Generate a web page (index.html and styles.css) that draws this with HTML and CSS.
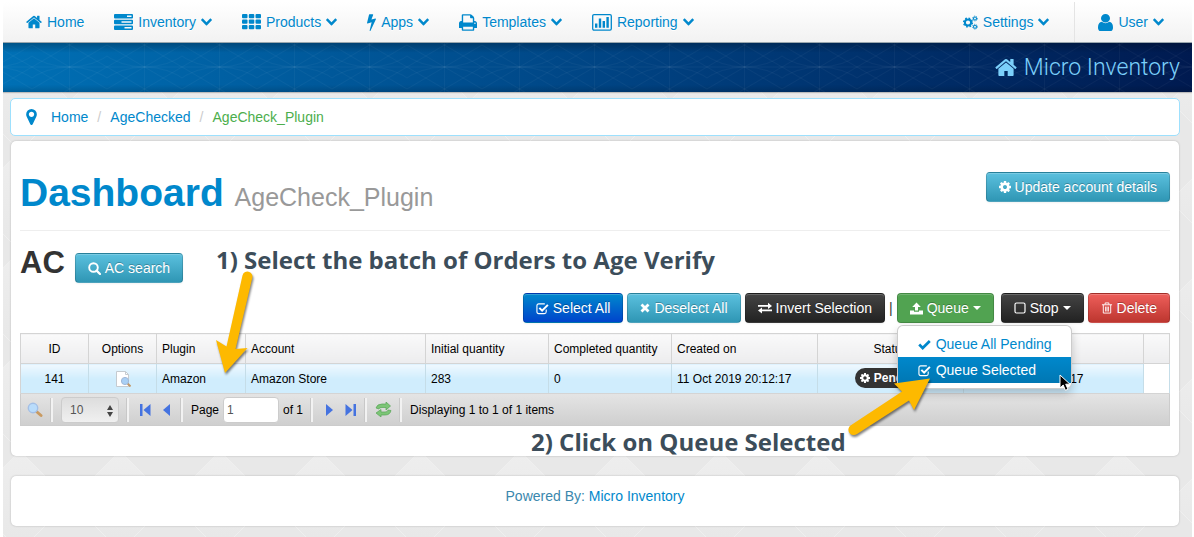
FILE: index.html
```
<!DOCTYPE html>
<html lang="en">
<head>
    <meta charset="UTF-8">
    <meta name="viewport" content="width=device-width, initial-scale=1.0">
    <title>Micro Inventory - Dashboard</title>
    <link rel="stylesheet" href="styles.css">
</head>
<body>
    <!-- Shared icons -->
    <svg class="sprite" aria-hidden="true">
        <symbol id="home" viewBox="64 192 1664 1408"><path d="M1472 992v480q0 26-19 45t-45 19h-384v-384h-256v384h-384q-26 0-45-19t-19-45v-480q0-1 .5-3t.5-3l575-474 575 474q1 2 1 6zm223-69l-62 74q-8 9-21 11h-3q-13 0-21-7l-692-577-692 577q-12 8-24 7-13-2-21-11l-62-74q-8-10-7-23.5t11-21.5l719-599q32-26 76-26t76 26l244 204v-195q0-14 9-23t23-9h192q14 0 23 9t9 23v408l219 182q10 8 11 21.5t-7 23.5z"/></symbol>
        <symbol id="chevron" viewBox="90 500 1612 1100"><path d="M1683 808l-742 741q-19 19-45 19t-45-19l-742-741q-19-19-19-45.5t19-45.5l166-165q19-19 45-19t45 19l531 531 531-531q19-19 45-19t45 19l166 165q19 19 19 45.5t-19 45.5z"/></symbol>
        <symbol id="cog" viewBox="128 128 1536 1536"><path d="M1152 896q0-106-75-181t-181-75-181 75-75 181 75 181 181 75 181-75 75-181zm512-109v222q0 12-8 23t-20 13l-185 28q-19 54-39 91 35 50 107 138 10 12 10 25t-9 23q-27 37-99 108t-94 71q-12 0-26-9l-138-108q-44 23-91 38-16 136-29 186-7 28-36 28h-222q-14 0-24.5-8.5t-11.5-21.5l-28-184q-49-16-90-37l-141 107q-10 9-25 9-14 0-25-11-126-114-165-168-7-10-7-23 0-12 8-23 15-21 51-66.5t54-70.5q-27-50-41-99l-183-27q-13-2-21-12.5t-8-23.5v-222q0-12 8-23t19-13l186-28q14-46 39-92-40-57-107-138-10-12-10-24 0-10 9-23 26-36 98.5-107.5t94.5-71.5q13 0 26 10l138 107q44-23 91-38 16-136 29-186 7-28 36-28h222q14 0 24.5 8.5t11.5 21.5l28 184q49 16 90 37l142-107q9-9 24-9 13 0 25 10 129 119 165 170 7 8 7 22 0 12-8 23-15 21-51 66.5t-54 70.5q26 50 41 98l183 28q13 2 21 12.5t8 23.5z"/></symbol>
        <symbol id="check-box" viewBox="0 0 14 13"><path d="M11 7.500v2.500q0 2-2 2H3q-2 0-2-2V3.500q0-2 2-2h6.500" fill="none" stroke="currentColor" stroke-width="1.200"/><path d="M3.600 5.800l3 3L12.800 2.600" fill="none" stroke="currentColor" stroke-width="2.200"/></symbol>
    </svg>

    <nav class="navbar">
        <ul class="nav">
            <li><a href="#"><svg class="i16"><use href="#home"/></svg>Home</a></li>
            <li><a href="#"><svg class="i19" viewBox="0 0 19 16"><path fill-rule="evenodd" d="M1 0h17q1 0 1 1v2.500q0 1-1 1H1q-1 0-1-1V1q0-1 1-1zM13 1.600v1.400h4.500V1.600zM1 5.700h17q1 0 1 1v2.500q0 1-1 1H1q-1 0-1-1V6.700q0-1 1-1zM7.500 7.300v1.400h10V7.300zM1 11.400h17q1 0 1 1v2.500q0 1-1 1H1q-1 0-1-1v-2.500q0-1 1-1zM10.500 13v1.400h7V13z"/></svg>Inventory<svg class="chev"><use href="#chevron"/></svg></a></li>
            <li><a href="#"><svg class="i19" viewBox="0 0 19 16"><g><rect width="5.500" height="4.300" rx="1"/><rect x="6.800" width="5.500" height="4.300" rx="1"/><rect x="13.500" width="5.500" height="4.300" rx="1"/><rect y="5.500" width="5.500" height="4.300" rx="1"/><rect x="6.800" y="5.500" width="5.500" height="4.300" rx="1"/><rect x="13.500" y="5.500" width="5.500" height="4.300" rx="1"/><rect y="11" width="5.500" height="4.300" rx="1"/><rect x="6.800" y="11" width="5.500" height="4.300" rx="1"/><rect x="13.500" y="11" width="5.500" height="4.300" rx="1"/></g></svg>Products<svg class="chev"><use href="#chevron"/></svg></a></li>
            <li><a href="#"><svg class="bolt" viewBox="448 0 900 1792"><path d="M1333 566q18 20 7 44l-540 1157q-13 25-42 25-4 0-14-2-17-5-25.500-19t-4.500-30l197-808-406 101q-4 1-12 1-18 0-31-11-18-15-13-39l201-825q4-14 16-23t28-9h328q19 0 32 12.500t13 29.500q0 8-5 18l-171 463 396-98q8-2 12-2 19 0 34 15z"/></svg>Apps<svg class="chev"><use href="#chevron"/></svg></a></li>
            <li><a href="#"><svg class="i18" viewBox="64 128 1664 1536"><path d="M448 1536h896v-256h-896v256zm0-640h896v-384h-160q-40 0-68-28t-28-68v-160h-640v640zm1152 64q0-26-19-45t-45-19-45 19-19 45 19 45 45 19 45-19 19-45zm128 0v416q0 13-9.500 22.500t-22.500 9.500h-224v160q0 40-28 68t-68 28h-960q-40 0-68-28t-28-68v-160h-224q-13 0-22.500-9.500t-9.500-22.500v-416q0-79 56.500-135.500t135.500-56.500h64v-544q0-40 28-68t68-28h672q40 0 88 20t76 48l152 152q28 28 48 76t20 88v256h64q79 0 135.500 56.500t56.500 135.500z"/></svg>Templates<svg class="chev"><use href="#chevron"/></svg></a></li>
            <li><a href="#"><svg class="i20" viewBox="0 0 20 17"><rect x=".7" y=".7" width="18.600" height="15.400" rx="1.300" fill="none" stroke="currentColor" stroke-width="1.300"/><path d="M3 9.500h2.400v4.200H3zM6.800 4.500h2.400v9.200H6.800zM10.600 7h2.400v6.700h-2.400zM14.400 3h2.400v10.700h-2.400z"/></svg>Reporting<svg class="chev"><use href="#chevron"/></svg></a></li>
        </ul>
        <ul class="nav">
            <li><a href="#"><svg class="i15" viewBox="0 0 15 15"><g fill="none" stroke="currentColor"><circle cx="5" cy="7.500" r="3.100" stroke-width="2"/><circle cx="5" cy="7.500" r="4.400" stroke-width="1.400" stroke-dasharray="1.730"/><circle cx="12" cy="3.500" r="1.500" stroke-width="1.100"/><circle cx="12" cy="3.500" r="2.400" stroke-width=".9" stroke-dasharray=".94"/><circle cx="12" cy="11.700" r="1.500" stroke-width="1.100"/><circle cx="12" cy="11.700" r="2.400" stroke-width=".9" stroke-dasharray=".94"/></g></svg>Settings<svg class="chev"><use href="#chevron"/></svg></a></li>
            <li class="divided"><a href="#"><svg class="i15 tall" viewBox="256 128 1280 1536" preserveAspectRatio="none"><path d="M1536 1399q0 109-62.500 187t-150.500 78h-854q-88 0-150.500-78t-62.500-187q0-85 8.500-160.500t31.500-152 58.500-131 94-89 134.500-34.500q131 128 313 128t313-128q76 0 134.500 34.500t94 89 58.500 131 31.500 152 8.500 160.500zm-256-887q0 159-112.500 271.500t-271.500 112.500-271.500-112.500-112.500-271.500 112.500-271.500 271.500-112.500 271.500 112.500 112.500 271.500z"/></svg>User<svg class="chev"><use href="#chevron"/></svg></a></li>
        </ul>
    </nav>

    <header class="banner">
        <a href="#"><svg class="i22"><use href="#home"/></svg>Micro Inventory</a>
    </header>

    <main class="content">
        <ol class="breadcrumb">
            <li><svg class="pin" viewBox="384 128 1024 1536"><path d="M1152 640q0-106-75-181t-181-75-181 75-75 181 75 181 181 75 181-75 75-181zm256 0q0 109-33 179l-364 774q-16 33-47.500 52t-67.500 19-67.500-19-46.500-52l-365-774q-33-70-33-179 0-212 150-362t362-150 362 150 150 362z"/></svg><a href="#">Home</a></li>
            <li><a href="#">AgeChecked</a></li>
            <li class="active">AgeCheck_Plugin</li>
        </ol>

        <section class="panel">
            <div class="page-header">
                <h1>Dashboard <small>AgeCheck_Plugin</small></h1>
                <button class="btn btn-info"><svg class="i12"><use href="#cog"/></svg>Update account details</button>
            </div>

            <div class="section-title">
                <h2>AC</h2>
                <button class="btn btn-info"><svg class="i13" viewBox="0 0 13 13"><circle cx="5.500" cy="5.500" r="4.300" fill="none" stroke="currentColor" stroke-width="1.900"/><path d="M8.600 8.600L12 12" stroke="currentColor" stroke-width="2.200" stroke-linecap="round"/></svg>AC search</button>
            </div>

            <div class="toolbar">
                <button class="btn btn-primary"><svg class="i13"><use href="#check-box"/></svg>Select All</button>
                <button class="btn btn-info"><svg class="i10" viewBox="0 0 10 10"><path d="M1.500 1.500l7 7M8.500 1.500l-7 7" stroke="currentColor" stroke-width="2.800"/></svg>Deselect All</button>
                <button class="btn btn-inverse"><svg class="i14" viewBox="0 0 14 12"><path d="M0 3h10V.7L14 3.900 10 7V4.800H0zM14 7.400H4V5.500L0 8.500l4 3V9.200h10z"/></svg>Invert Selection</button>
                <span>|</span>
                <div class="dropdown">
                    <button class="btn btn-success"><svg class="i13" viewBox="0 0 13 12"><path d="M6.500 0L10.800 4.500H8V8H5V4.500H2.200zM0 8h4v1.300h5V8h4v4H0z"/></svg>Queue<i class="caret"></i></button>
                    <ul class="menu">
                        <li><a href="#"><svg class="i13" viewBox="0 0 13 11"><path d="M1.200 5.500l3.500 3.500L11.800 2" fill="none" stroke="currentColor" stroke-width="2.700"/></svg>Queue All Pending</a></li>
                        <li class="hover"><a href="#"><svg class="i13"><use href="#check-box"/></svg>Queue Selected</a></li>
                    </ul>
                    <svg class="cursor" viewBox="0 0 12 18"><path d="M1 1v13l3.200-3 2.200 5.300 2.600-1.100-2.300-5h4.300z" fill="#000" stroke="#fff"/></svg>
                </div>
                <button class="btn btn-inverse"><svg class="i12" viewBox="0 0 12 12"><rect x="1" y="1" width="10" height="10" rx="1.500" fill="none" stroke="currentColor" stroke-width="1.200"/></svg>Stop<i class="caret"></i></button>
                <button class="btn btn-danger"><svg class="i12" viewBox="0 0 12 13"><path d="M.5 3h11M4 2.700V1h4v1.700M2 3v9h8V3M4.500 5v5.300M6 5v5.300M7.500 5v5.300" fill="none" stroke="currentColor" stroke-width="1"/></svg>Delete</button>
            </div>

            <table class="grid">
                <colgroup>
                    <col class="c-id"><col class="c-id"><col class="c-plugin"><col class="c-account"><col class="c-qty"><col class="c-qty"><col class="c-date"><col class="c-date"><col class="c-account"><col>
                </colgroup>
                <thead>
                    <tr>
                        <th class="center">ID</th>
                        <th class="center">Options</th>
                        <th>Plugin</th>
                        <th>Account</th>
                        <th>Initial quantity</th>
                        <th>Completed quantity</th>
                        <th>Created on</th>
                        <th class="center">Status</th>
                        <th></th>
                        <th></th>
                    </tr>
                </thead>
                <tbody>
                    <tr>
                        <td class="center">141</td>
                        <td class="center"><svg class="i16" viewBox="0 0 16 16"><path d="M1.500.5h9l3 3v12h-12z" fill="#fff" stroke="#c5cbd0"/><path d="M10.500.5v3h3" fill="none" stroke="#c5cbd0"/><path d="M12.500 12.500l3 3" stroke="#c29a6b" stroke-width="2"/><circle cx="10" cy="10" r="3.600" fill="#a9d0f5" stroke="#a0b8d8"/></svg></td>
                        <td>Amazon</td>
                        <td>Amazon Store</td>
                        <td>283</td>
                        <td>0</td>
                        <td>11 Oct 2019 20:12:17</td>
                        <td class="center"><span class="badge"><svg class="i10"><use href="#cog"/></svg>Pending</span></td>
                        <td>11 Oct 2019 20:12:17</td>
                        <td></td>
                    </tr>
                </tbody>
            </table>

            <div class="pager">
                <button class="tool" aria-label="Find"><svg class="i16" viewBox="0 0 16 16"><path d="M9.500 9.500l4.500 4" stroke="#c99a61" stroke-width="3" stroke-linecap="round"/><circle cx="6" cy="6" r="4.700" fill="#b9dcfb" stroke="#a3bfe6" stroke-width="1.400"/></svg></button>
                <div class="group size">
                    <select aria-label="Rows per page"><option>10</option></select>
                    <svg class="arrows" viewBox="0 0 6 12"><path d="M3 0l3 5H0zM3 12L0 7h6z"/></svg>
                </div>
                <div class="group">
                    <button class="tool" aria-label="First page"><svg class="i12" viewBox="0 0 12 12"><path d="M1 0h2.500v12H1zM11.500 0v12L4.500 6z"/></svg></button>
                    <button class="tool" aria-label="Previous page"><svg class="i12" viewBox="0 0 12 12"><path d="M9 0v12L2 6z"/></svg></button>
                </div>
                <div class="group page">
                    <label for="page">Page</label>
                    <input type="text" id="page" value="1">
                    <span>of 1</span>
                </div>
                <div class="group">
                    <button class="tool" aria-label="Next page"><svg class="i12" viewBox="0 0 12 12"><path d="M3 0v12l7-6z"/></svg></button>
                    <button class="tool" aria-label="Last page"><svg class="i12" viewBox="0 0 12 12"><path d="M8.500 0H11v12H8.500zM.5 0v12l7-6z"/></svg></button>
                </div>
                <div class="group refresh">
                    <button class="tool" aria-label="Refresh"><svg class="i17" viewBox="0 0 17 15"><path d="M1 6q1-4 6-4h4V0l4.500 4L11 8V5.500H7Q4 5.500 4 7zM16 8.500q-1 4.500-6 4.500H6v2l-5-4 5-3.500V10h4q3 0 3-2z" fill="#7cc576" stroke="#58a556" stroke-width=".7"/></svg></button>
                </div>
                <div class="group status">Displaying 1 to 1 of 1 items</div>
            </div>

            <!-- Walkthrough notes -->
            <p class="note note-one">1) Select the batch of Orders to Age Verify</p>
            <svg class="arrow arrow-one" viewBox="0 0 40 106"><path d="M27.500 4.500a5 5 0 0 1 9.800 2.300L20.500 78l12 -1L10 102 1 69l10.500 6.500z"/></svg>
            <p class="note note-two">2) Click on Queue Selected</p>
            <svg class="arrow arrow-two" viewBox="0 0 88 62"><path d="M2.500 49.500L54 15.500 46 7.500 82 2.500 66 34 61 24.500 9 58a5 5 0 0 1-6.500-8.500z"/></svg>
        </section>
    </main>

    <footer class="footer">Powered By: <a href="#">Micro Inventory</a></footer>
</body>
</html>
```

FILE: styles.css
```
* {
    box-sizing: border-box;
}
html {
    background: #fff;
}
body {
    margin: 2px 2px 0 3px;
    padding-bottom: 11px;
    font: 14px/20px "Liberation Sans", Arial, sans-serif;
    color: #333;
    background: #e8e8e8 url("data:image/svg+xml,%3Csvg xmlns='http://www.w3.org/2000/svg' width='100' height='100'%3E%3Cdefs%3E%3ClinearGradient id='g' x2='0' y2='1'%3E%3Cstop stop-color='%23eeeeee'/%3E%3Cstop offset='1' stop-color='%23e7e7e7'/%3E%3C/linearGradient%3E%3C/defs%3E%3Cpath d='M50 0L100 50 50 100 0 50z' fill='url(%23g)'/%3E%3Cpath d='M50 0L100 50M50 0L0 50M50 100L0 50M50 100L100 50' stroke='%23efefef'/%3E%3C/svg%3E") -33px 49px;
}
a {
    color: #0088cc;
    text-decoration: none;
}
ul, ol {
    list-style: none;
    margin: 0;
    padding: 0;
}
svg {
    fill: currentColor;
    flex: none;
}
.sprite {
    display: none;
}

/* icon sizes */
.i10 { width: 10px; height: 10px; }
.i12 { width: 12px; height: 12px; }
.i13 { width: 13px; height: 13px; }
.i14 { width: 14px; height: 12px; }
.i15 { width: 15px; height: 15px; }
.i16 { width: 16px; height: 16px; }
.i17 { width: 17px; height: 15px; }
.i18 { width: 18px; height: 17px; }
.i19 { width: 19px; height: 16px; }
.i20 { width: 20px; height: 17px; }
.i22 { width: 22px; height: 19px; }
.tall { height: 17px; }
.bolt { width: 9px; height: 18px; }
.pin { width: 11px; height: 16px; color: #0088cc; }
.chev { width: 11px; height: 8px; }

.navbar {
    display: flex;
    justify-content: space-between;
    padding: 0 13px 0 8px;
    background: linear-gradient(#fff, #f2f2f2);
    border-bottom: 1px solid #9aa7ae;
}
.nav {
    display: flex;
}
.nav a {
    display: flex;
    align-items: center;
    gap: 5px;
    height: 40px;
    padding: 0 15px;
    text-shadow: 0 1px 0 #fff;
}
.divided {
    margin-left: 10px;
    padding-left: 8px;
    border-left: 1px solid #e4e4e4;
}

.banner {
    display: flex;
    justify-content: flex-end;
    align-items: center;
    height: 49px;
    padding-right: 12px;
    background:
        url("data:image/svg+xml,%3Csvg xmlns='http://www.w3.org/2000/svg' width='75' height='98'%3E%3Cg fill='none' stroke='%23fff' stroke-opacity='.035'%3E%3Cpath d='M0 49h75M37.500 0v98M0 27L75 71M0 71L75 27M0 5L75 49M0 93L75 49M0 49L75 5M0 49L75 93'/%3E%3Cellipse cx='37.500' cy='0' rx='60' ry='49'/%3E%3Cellipse cx='37.500' cy='98' rx='60' ry='49'/%3E%3C/g%3E%3C/svg%3E") 29px -25px,
        linear-gradient(rgba(0, 0, 0, .25), transparent 20%, transparent 85%, rgba(0, 0, 0, .15)),
        linear-gradient(to right, #0070b5, #00407f 55%, #001a50);
    box-shadow: 0 1px 1px rgba(0, 0, 0, .2);
}
.banner a {
    display: flex;
    align-items: center;
    gap: 7px;
    font: 300 23px/30px Roboto, "Liberation Sans", sans-serif;
    color: #7bd0fb;
}

.content {
    padding: 6px 12px 0 7px;
}
.breadcrumb {
    display: flex;
    margin-bottom: 5px;
    padding: 8px 15px;
    background: #fff;
    border: 1px solid #9de0fd;
    border-radius: 5px;
}
.breadcrumb li {
    display: flex;
    align-items: center;
    gap: 14px;
}
.breadcrumb li + li::before {
    content: "/";
    width: 4px;
    margin-left: 9px;
    margin-right: -5px;
    color: #ccc;
}
.breadcrumb .active {
    color: #4cae4c;
}

.panel {
    position: relative;
    margin: 0 1px;
    padding: 31px 9px 30px;
    background: #fff;
    border-radius: 5px;
    box-shadow: 0 0 2px rgba(0, 0, 0, .25);
}
.page-header {
    display: flex;
    justify-content: space-between;
    align-items: flex-start;
    padding-bottom: 16px;
    border-bottom: 1px solid #eee;
}
h1, h2 {
    margin: 0;
}
h1 {
    font-size: 39px;
    line-height: 42px;
    color: #0088cc;
}
h1 small {
    font-size: 25px;
    line-height: 20px;
    font-weight: normal;
    color: #999;
}
.section-title {
    display: flex;
    align-items: flex-end;
    gap: 10px;
    height: 52px;
}
h2 {
    font-size: 31px;
    line-height: 40px;
}

.btn {
    display: inline-flex;
    align-items: center;
    gap: 4px;
    height: 30px;
    padding: 0 12px;
    font: inherit;
    color: #fff;
    text-shadow: 0 -1px 0 rgba(0, 0, 0, .25);
    white-space: nowrap;
    border: 1px solid rgba(0, 0, 0, .15);
    border-radius: 4px;
    box-shadow: inset 0 1px 0 rgba(255, 255, 255, .2), 0 1px 2px rgba(0, 0, 0, .05);
    cursor: pointer;
}
.btn-info {
    background: linear-gradient(#5bc0de, #2f96b4);
}
.btn-primary {
    background: linear-gradient(#0088cc, #0044cc);
}
.btn-inverse {
    background: linear-gradient(#444, #222);
}
.btn-success {
    background: #51a351;
}
.btn-danger {
    background: linear-gradient(#ee5f5b, #bd362f);
}
.caret {
    border: 4px solid transparent;
    border-top-color: #fff;
    border-bottom: 0;
}

.toolbar {
    display: flex;
    justify-content: flex-end;
    align-items: center;
    gap: 4px;
    padding: 10px 0;
}
.dropdown {
    position: relative;
    display: flex;
    margin-right: 3px;
}
.menu {
    position: absolute;
    top: 32px;
    left: 0;
    z-index: 2;
    width: 175px;
    padding: 5px 0;
    background: #fff;
    border: 1px solid rgba(0, 0, 0, .2);
    border-radius: 6px;
    box-shadow: 0 5px 10px rgba(0, 0, 0, .2);
}
.menu a {
    display: flex;
    align-items: center;
    gap: 5px;
    padding: 3px 20px;
    white-space: nowrap;
}
.menu .hover a {
    color: #fff;
    background: linear-gradient(#0088cc, #0077b3);
}
.cursor {
    position: absolute;
    top: 81px;
    left: 162px;
    z-index: 3;
    width: 12px;
    height: 18px;
}

.grid {
    width: 100%;
    table-layout: fixed;
    border-collapse: collapse;
    border: 1px solid #ccc;
    font-size: 12px;
    color: #000;
}
.c-id { width: 68px; }
.c-plugin { width: 89px; }
.c-account { width: 180px; }
.c-qty { width: 123px; }
.c-date { width: 146px; }
.grid th, .grid td {
    height: 30px;
    padding: 0 5px;
    font-weight: normal;
    text-align: left;
    white-space: nowrap;
    border: 1px solid #d4d4d4;
}
.grid th {
    background: linear-gradient(#fafafa, #ececee);
}
.grid td {
    background: linear-gradient(#eff8fe, #d0edfd 50%);
    border-right-color: #c5dde8;
}
.grid td:last-child {
    background: #fff;
}
.grid .center {
    text-align: center;
}
.grid svg {
    vertical-align: middle;
}
.badge {
    display: inline-flex;
    align-items: center;
    gap: 4px;
    height: 20px;
    padding: 0 5px;
    font-weight: bold;
    color: #fff;
    background: #333;
    border-radius: 10px;
}

.pager {
    display: flex;
    align-items: center;
    height: 32px;
    padding: 0 6px;
    font-size: 12px;
    color: #000;
    background: linear-gradient(#e4e4e4, #cfcfcf);
    border: 1px solid #ccc;
    border-top: 0;
}
.tool {
    display: flex;
    padding: 0;
    color: #4573e0;
    background: none;
    border: 0;
}
.group {
    display: flex;
    align-items: center;
    gap: 10px;
    height: 24px;
    margin-left: 8px;
    padding-left: 10px;
    border-left: 2px solid #f2f2f2;
    box-shadow: -1px 0 0 #c8c8c8;
}
.size {
    position: relative;
    padding-left: 8px;
}
.page, .status {
    gap: 4px;
    padding-left: 8px;
}
.refresh {
    padding-left: 8px;
}
.pager select, .pager input {
    height: 26px;
    font: inherit;
    color: #555;
    border: 1px solid #ccc;
    border-radius: 4px;
}
.pager select {
    width: 58px;
    padding: 0 8px;
    appearance: none;
    background: linear-gradient(#ddd, #f0f0f0);
}
.pager input {
    width: 56px;
    padding: 0 3px;
    background: #fff;
}
.arrows {
    position: absolute;
    top: 7px;
    right: 6px;
    width: 6px;
    height: 12px;
    color: #444;
}

/* walkthrough notes lie over the panel */
.note {
    position: absolute;
    margin: 0;
    font: 700 24px/30px "Open Sans", sans-serif;
    color: #3c4d5a;
    white-space: nowrap;
}
.note-one {
    top: 104px;
    left: 205px;
}
.note-two {
    top: 286px;
    left: 520px;
}
.arrow {
    position: absolute;
    z-index: 3;
    color: #fdb900;
    filter: drop-shadow(1px 2px 1px rgba(0, 0, 0, .5));
}
.arrow-one {
    top: 130px;
    left: 204px;
    width: 40px;
    height: 106px;
}
.arrow-two {
    top: 235px;
    left: 837px;
    width: 88px;
    height: 62px;
}

.footer {
    height: 50px;
    margin: 20px 13px 0 8px;
    padding: 10px;
    text-align: center;
    color: #3a87ad;
    background: #fff;
    border-radius: 5px;
    box-shadow: 0 0 2px rgba(0, 0, 0, .25);
}
```
